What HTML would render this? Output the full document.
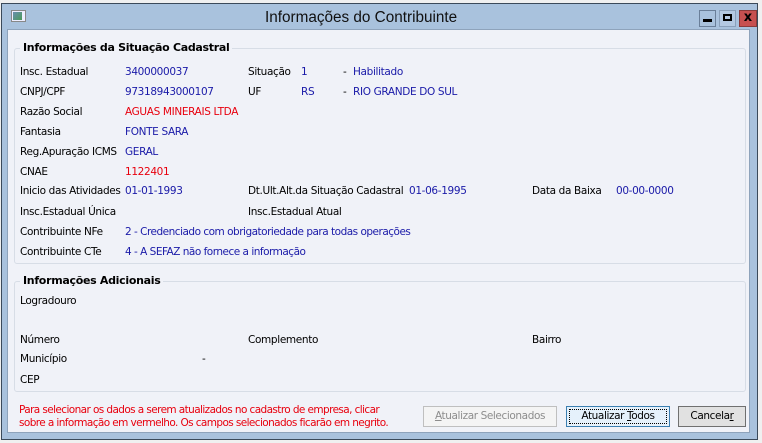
<!DOCTYPE html>
<html><head><meta charset="utf-8"><style>
*{margin:0;padding:0;box-sizing:border-box}
body{width:762px;height:443px;background:#f0f0f0;position:relative;overflow:hidden;font-family:Tahoma,"DejaVu Sans",sans-serif;font-size:11px;color:#000}
.win{position:absolute;left:1px;top:3px;width:757px;height:437px;background:#a9c2dd;border:1px solid #3b4a5a}
.client{position:absolute;width:743px;height:404px;background:#f0f2f8;border:1px solid #8ea3bb}
.title{position:absolute;left:263px;top:5px;white-space:nowrap;font-family:"Liberation Sans",sans-serif;font-size:15.3px;color:#111}
.t{position:absolute;white-space:nowrap;font-family:"DejaVu Sans",sans-serif;font-size:10.5px;letter-spacing:-0.35px}
.b{color:#1a1aa8}.r{color:#e8000e}
.gb{position:absolute;border:1px solid #d7dde6;border-radius:3px}
.gt{position:absolute;background:#f0f2f8;font-weight:bold;font-family:"DejaVu Sans",sans-serif;font-size:11px;padding:0 3px;letter-spacing:-0.3px;white-space:nowrap}
.btn{position:absolute;height:21px;border:1px solid #707070;background:#e1e1e1;text-align:center;line-height:19px;font-family:"DejaVu Sans",sans-serif;font-size:10.5px;letter-spacing:-0.4px}
.wb{position:absolute;top:6px;width:17px;height:17px;border:1px solid #6a7f99}
</style></head><body>
<div class="win">
 <div style="position:absolute;left:9px;top:6px;width:15px;height:12px;background:#eef;border:1px solid #888"><div style="position:absolute;left:1px;top:1px;width:9px;height:8px;background:linear-gradient(135deg,#6a8fb0,#4a9a5a)"></div></div>
 <div class="title">Informações do Contribuinte</div>
 <div class="wb" style="left:697px;background:#a9c2dd"><div style="position:absolute;left:3px;top:8px;width:9px;height:3px;background:#000"></div></div>
 <div class="wb" style="left:717px;background:#b4c9e2;border-color:#8aa0ba"><div style="position:absolute;left:3px;top:3px;width:9px;height:7px;border:2px solid #000"></div></div>
 <div class="wb" style="left:737px;width:18px;background:#c75050;border-color:#8a3a3a;color:#000;font-weight:bold;font-size:13px;text-align:center;line-height:14px;font-family:'DejaVu Sans'">x</div>
</div>
<div class="client" style="left:7px;top:29px"></div>

<div class="gb" style="left:14px;top:48px;width:732px;height:216px"></div>
<div class="gt" style="left:20px;top:41px">Informações da Situação Cadastral</div>

<div class="t" style="left:20px;top:66px">Insc. Estadual</div><div class="t b" style="left:125px;top:66px">3400000037</div>
<div class="t" style="left:248px;top:66px">Situação</div><div class="t b" style="left:301px;top:66px">1</div><div class="t" style="left:343px;top:66px">-</div><div class="t b" style="left:353px;top:66px">Habilitado</div>
<div class="t" style="left:20px;top:86px">CNPJ/CPF</div><div class="t b" style="left:125px;top:86px">97318943000107</div>
<div class="t" style="left:248px;top:86px">UF</div><div class="t b" style="left:301px;top:86px">RS</div><div class="t" style="left:343px;top:86px">-</div><div class="t b" style="left:353px;top:86px">RIO GRANDE DO SUL</div>
<div class="t" style="left:20px;top:106px">Razão Social</div><div class="t r" style="left:125px;top:106px">AGUAS MINERAIS LTDA</div>
<div class="t" style="left:20px;top:126px">Fantasia</div><div class="t b" style="left:125px;top:126px">FONTE SARA</div>
<div class="t" style="left:20px;top:146px">Reg.Apuração ICMS</div><div class="t b" style="left:125px;top:146px">GERAL</div>
<div class="t" style="left:20px;top:166px">CNAE</div><div class="t r" style="left:125px;top:166px">1122401</div>
<div class="t" style="left:20px;top:185px">Inicio das Atividades</div><div class="t b" style="left:125px;top:185px">01-01-1993</div>
<div class="t" style="left:248px;top:185px">Dt.Ult.Alt.da Situação Cadastral</div><div class="t b" style="left:409px;top:185px">01-06-1995</div>
<div class="t" style="left:532px;top:185px">Data da Baixa</div><div class="t b" style="left:616px;top:185px">00-00-0000</div>
<div class="t" style="left:20px;top:206px">Insc.Estadual Única</div>
<div class="t" style="left:248px;top:206px">Insc.Estadual Atual</div>
<div class="t" style="left:20px;top:226px">Contribuinte NFe</div><div class="t b" style="left:125px;top:226px;letter-spacing:-0.5px">2 - Credenciado com obrigatoriedade para todas operações</div>
<div class="t" style="left:20px;top:246px">Contribuinte CTe</div><div class="t b" style="left:125px;top:246px;letter-spacing:-0.5px">4 - A SEFAZ não fornece a informação</div>

<div class="gb" style="left:14px;top:281px;width:732px;height:111px"></div>
<div class="gt" style="left:20px;top:274px">Informações Adicionais</div>
<div class="t" style="left:20px;top:295px">Logradouro</div>
<div class="t" style="left:20px;top:334px">Número</div>
<div class="t" style="left:248px;top:334px">Complemento</div>
<div class="t" style="left:532px;top:334px">Bairro</div>
<div class="t" style="left:20px;top:353px">Município</div><div class="t" style="left:202px;top:353px">-</div>
<div class="t" style="left:20px;top:374px">CEP</div>

<div class="t r" style="left:19px;top:404px;letter-spacing:-0.6px">Para selecionar os dados a serem atualizados no cadastro de empresa, clicar</div>
<div class="t r" style="left:19px;top:417px;letter-spacing:-0.6px">sobre a informação em vermelho. Os campos selecionados ficarão em negrito.</div>

<div class="btn" style="left:423px;top:406px;width:134px;border-color:#bfbfbf;background:#f4f4f4;color:#8d8d8d"><u>A</u>tualizar Selecionados</div>
<div class="btn" style="left:566px;top:406px;width:104px;border-color:#3c7fb1;background:#e5f1fb"><div style="position:absolute;left:2px;top:2px;right:2px;bottom:2px;border:1px dotted #000"></div>Atualizar <u>T</u>odos</div>
<div class="btn" style="left:678px;top:406px;width:68px">Cancela<u>r</u></div>
</body></html>
